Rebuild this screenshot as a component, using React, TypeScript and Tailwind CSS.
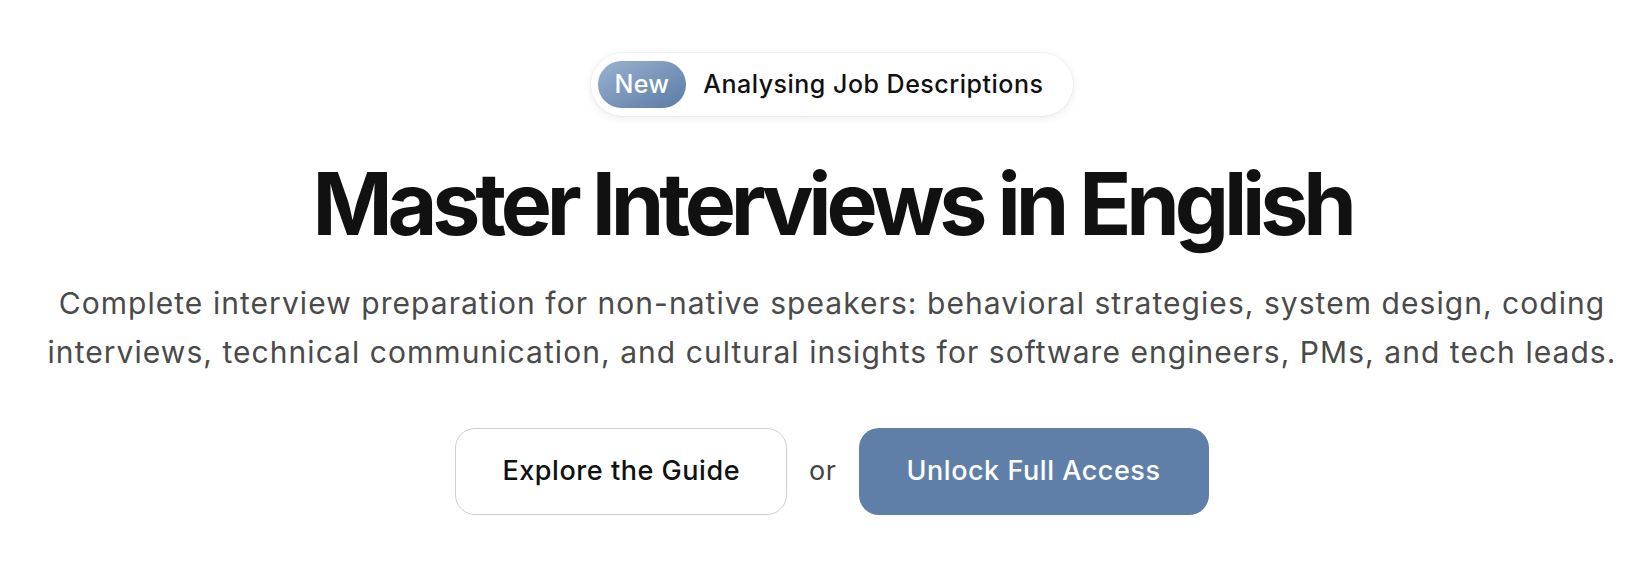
export default function App() {
  return (
    <div className="flex min-h-screen flex-col items-center bg-white pt-[53px] pl-[12px] font-['Inter',sans-serif] text-[#111]">
      {/* Announcement pill */}
      <div className="flex h-[63px] items-center gap-[17px] rounded-full bg-white pl-[7px] pr-[30px] shadow-[0_2px_10px_rgba(0,0,0,0.08)] ring-1 ring-black/[0.03]">
        <span className="flex h-[47px] items-center rounded-full bg-gradient-to-br from-[#9ab2d0] to-[#5b7ba5] px-[17px] text-[25px] font-medium tracking-[0.01em] text-white">
          New
        </span>
        <span className="text-[25px] font-medium tracking-[0.02em]">Analysing Job Descriptions</span>
      </div>

      <h1 className="mt-[44px] text-[86px] leading-[88px] font-bold tracking-[-0.06em]">
        Master Interviews in English
      </h1>

      <p className="mt-[31px] max-w-[1640px] text-center text-[30px] leading-[49px] tracking-[0.035em] text-[#4a4a4a]">
        Complete interview preparation for non-native speakers: behavioral strategies, system design, coding
        <br />
        interviews, technical communication, and cultural insights for software engineers, PMs, and tech leads.
      </p>

      <div className="mt-[51px] flex items-center gap-[22px]">
        <button className="h-[87px] rounded-[20px] border-[1.5px] border-[#cfcfcf] bg-white px-[46px] text-[27px] font-medium tracking-[0.02em] text-[#111]">
          Explore the Guide
        </button>
        <span className="text-[27px] tracking-[0.02em] text-[#444]">or</span>
        <button className="h-[87px] rounded-[20px] bg-[#5f7fa8] px-12 text-[27px] font-medium tracking-[0.02em] text-white">
          Unlock Full Access
        </button>
      </div>
    </div>
  );
}
